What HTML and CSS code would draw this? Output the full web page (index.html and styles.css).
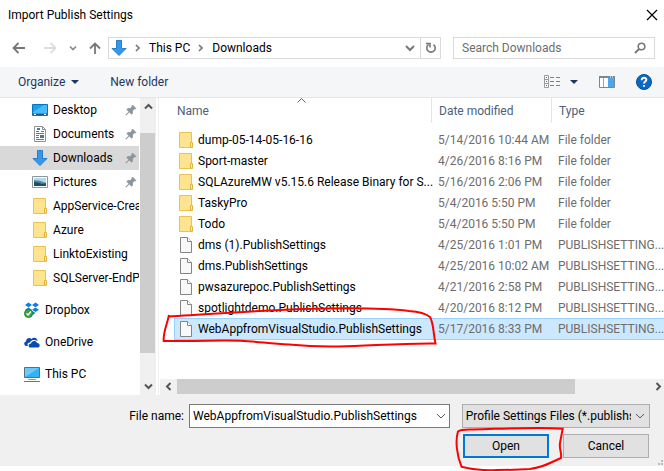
FILE: index.html
```html
<!DOCTYPE html>
<html lang="en">
<head>
<meta charset="utf-8">
<title>Import Publish Settings</title>
<meta name="viewport" content="width=device-width, initial-scale=1">
<link rel="stylesheet" href="styles.css">
</head>
<body>
<svg class="defs" aria-hidden="true">
  <symbol id="folder" viewBox="0 0 16 18">
    <path d="M1.500 1.500h12v10l1 .5v4.500h-13z" fill="#ffe48f" stroke="#e9c255"/>
    <path d="M12.500 16v-4.500h2V16z" fill="#fff0b5" stroke="#e2b43c"/>
  </symbol>
  <symbol id="file" viewBox="0 0 16 18">
    <path d="M2.500 1.500h7l4 4v11h-11z" fill="#f8f8f8" stroke="#858585"/>
    <path d="M9.500 1.500v4h4" fill="#fff" stroke="#858585"/>
  </symbol>
  <symbol id="down" viewBox="0 0 16 18">
    <path d="M5.500 1.500h5v8h4.500L8 16.500 1 9.500h4.500z" fill="#3697e8" stroke="#2480cb"/>
  </symbol>
  <symbol id="pin" viewBox="0 0 12 12">
    <path d="M7.500 1l3.500 3.500-1.200.6-.5-.1-1.900 1.900.1 2.300-1 1L4.300 8 1 11.200 .8 11 4 7.700 1.800 5.500l1-1 2.300.1L7 2.700 6.900 2z" fill="#8a959e" stroke="#8a959e" stroke-width=".8"/>
  </symbol>
  <symbol id="chev-right" viewBox="0 0 6 8"><path d="M1 1l3 3-3 3" fill="none" stroke="#777" stroke-width="1.700"/></symbol>
  <symbol id="chev-down" viewBox="0 0 10 6"><path d="M1 1l4 4 4-4" fill="none" stroke="currentColor"/></symbol>
</svg>

<main class="dialog">
  <header class="titlebar">
    <h1>Import Publish Settings</h1>
    <button class="close" aria-label="Close"><svg width="12" height="12" viewBox="0 0 12 12"><path d="M1 1l10 10M11 1L1 11" stroke="#000" stroke-width="1.200"/></svg></button>
  </header>

  <nav class="navbar" aria-label="Location">
    <div class="history">
      <button class="back" aria-label="Back"><svg width="14" height="12" viewBox="0 0 14 12"><path d="M13 6H2M6.500 1L1.500 6l5 5" fill="none" stroke="#777" stroke-width="1.800"/></svg></button>
      <button aria-label="Forward"><svg width="14" height="12" viewBox="0 0 14 12"><path d="M1 6h11M7.500 1l5 5-5 5" fill="none" stroke="#ddd" stroke-width="1.800"/></svg></button>
      <button aria-label="Recent locations"><svg width="8" height="6" viewBox="0 0 8 6"><path d="M1 1.500l3 3 3-3" fill="none" stroke="#888" stroke-width="1.600"/></svg></button>
      <button aria-label="Up"><svg width="12" height="12" viewBox="0 0 12 12"><path d="M6 12V2M1 6.500l5-5 5 5" fill="none" stroke="#777" stroke-width="1.800"/></svg></button>
    </div>
    <div class="address">
      <svg class="icon" aria-hidden="true"><use href="#down"/></svg>
      <svg class="crumb-sep" aria-hidden="true"><use href="#chev-right"/></svg>
      <a href="#">This PC</a>
      <svg class="crumb-sep" aria-hidden="true"><use href="#chev-right"/></svg>
      <a href="#">Downloads</a>
      <button class="expand" aria-label="Previous locations"><svg width="10" height="8" viewBox="0 0 10 8"><path d="M1 2l4 4 4-4" fill="none" stroke="#777" stroke-width="2"/></svg></button>
      <button class="refresh" aria-label="Refresh"><svg width="12" height="12" viewBox="0 0 12 12"><path d="M8.500 2.600A4.200 4.200 0 1 1 3.500 2.600M1 1.500h4v4" fill="none" stroke="#777" stroke-width="1.600"/></svg></button>
    </div>
    <div class="search">
      <input type="search" placeholder="Search Downloads" aria-label="Search Downloads">
      <svg width="12" height="12" viewBox="0 0 12 12" aria-hidden="true"><circle cx="7.500" cy="4.500" r="3.300" fill="none" stroke="#777" stroke-width="1.600"/><path d="M5 7L1 11" stroke="#777" stroke-width="2"/></svg>
    </div>
  </nav>

  <div class="toolbar">
    <button>Organize <svg width="8" height="4" viewBox="0 0 8 4"><path d="M0 0h8L4 4z" fill="#1c3762"/></svg></button>
    <button>New folder</button>
    <div class="tools">
      <button aria-label="Change view">
        <svg width="17" height="14" viewBox="0 0 17 14"><path d="M.5.5h4v12h-4zM.5 4.500h4M.5 8.500h4" fill="#fff" stroke="#999"/><path d="M2 2h1v1H2zM2 6h1v1H2z" fill="#3d66a3"/><path d="M2 10h1v1H2z" fill="#c33"/><path d="M6 2.500h4m2 0h4M6 6.500h4m2 0h4M6 10.500h4m2 0h4" stroke="#808080"/></svg>
        <svg width="8" height="4" viewBox="0 0 8 4"><path d="M0 0h8L4 4z" fill="#1c3762"/></svg>
      </button>
      <button aria-label="Preview pane"><svg width="16" height="12" viewBox="0 0 16 12"><path d="M.5.500h15v11H.5z" fill="#fff" stroke="#7a8790"/><path d="M0 0h16v2H0z" fill="#7a8790"/><path d="M4.500 2v9" stroke="#9aa"/><path d="M9 2h6v9H9z" fill="#4ba6ec"/><path d="M11 1h1m1 0h1" stroke="#fff"/></svg></button>
      <button aria-label="Help"><svg width="16" height="16" viewBox="0 0 16 16"><circle cx="8" cy="8" r="7.500" fill="#0a67c2" stroke="#0a4f96"/><path d="M5.700 6.200C5.700 3 10.400 3.100 10.400 5.800 10.400 7.600 8 7.600 8 9.600M8 10.900v1.900" fill="none" stroke="#fff" stroke-width="1.900"/></svg></button>
    </div>
  </div>

  <div class="content">
    <aside class="sidebar">
      <nav class="places" aria-label="Places">
        <ul>
          <li><a href="#"><svg class="icon" viewBox="0 0 16 18"><path d="M.5 3.500h15v11H.5z" fill="#15a0f7" stroke="#0874b9"/><path d="M1 11L12 4h3v8H1z" fill="#4bb9fb"/><path d="M1 13.500h14" stroke="#075b98"/><path d="M2 13.500h2m8 0h2" stroke="#fff"/></svg><span>Desktop</span><svg class="pin"><use href="#pin"/></svg></a></li>
          <li><a href="#"><svg class="icon" viewBox="0 0 16 18"><path d="M2.500 1.500h8l3 3v12h-11z" fill="#fff" stroke="#8c9295"/><path d="M10.500 1.500v3h3" fill="none" stroke="#8c9295"/><path d="M4 6.500h3M9 6.500h3M4 8.500h8M4 10.500h3M4 12.500h3M4 14.500h8" stroke="#2d89be"/><path d="M5 3h3v2H5z" fill="#2086c8"/><path d="M8 10h4v3H8z" fill="#477d87"/></svg><span>Documents</span><svg class="pin"><use href="#pin"/></svg></a></li>
          <li><a href="#" class="current"><svg class="icon"><use href="#down"/></svg><span>Downloads</span><svg class="pin"><use href="#pin"/></svg></a></li>
          <li><a href="#"><svg class="icon" viewBox="0 0 16 18"><path d="M.5 3.500h15v11H.5z" fill="#fff" stroke="#8d9498"/><path d="M2 5h12v8H2z" fill="#afd9f2"/><path d="M2 7q6 0 12 3v3H2z" fill="#568b9e"/><path d="M2 9q5 0 8 2l4-1v3H2z" fill="#1e4c69"/></svg><span>Pictures</span><svg class="pin"><use href="#pin"/></svg></a></li>
          <li><a href="#"><svg class="icon"><use href="#folder"/></svg><span>AppService-Crea</span></a></li>
          <li><a href="#"><svg class="icon"><use href="#folder"/></svg><span>Azure</span></a></li>
          <li><a href="#"><svg class="icon"><use href="#folder"/></svg><span>LinktoExisting</span></a></li>
          <li><a href="#"><svg class="icon"><use href="#folder"/></svg><span>SQLServer-EndP</span></a></li>
        </ul>
        <ul class="roots">
          <li><a href="#"><svg class="icon" viewBox="0 0 16 18"><path d="M4.500 1.500L8 4 4.500 6.300 1 4zM11.500 1.500L15 4l-3.500 2.300L8 4zM4.500 6.500L8 8.800 4.500 11 1 8.800zM11.500 6.500L15 8.800 11.500 11 8 8.800zM5 12l3-2.200 3.500 2.200L8 14.500z" fill="#0b7ee0"/><circle cx="4.500" cy="12.500" r="4" fill="#39a647" stroke="#278334"/><path d="M2.500 12.500L4 14l3-3.500" fill="none" stroke="#fff" stroke-width="1.500"/></svg><span>Dropbox</span></a></li>
          <li><a href="#"><svg class="icon" viewBox="0 0 16 18"><path d="M3 13C-.5 13-.5 9 2 8.500 2 5 5.500 4 7.500 6c3-2.500 6-.5 6 2-5-2.500-7 0-7.500 1.500C3.500 9.500 3 11.500 4 13z" fill="#094ab2"/><path d="M6.500 14.500c-2.500 0-2.500-4 .5-4 .5-3 5-3.500 6-.5 3.500 0 3.500 4.500.5 4.500z" fill="#094ab2"/></svg><span>OneDrive</span></a></li>
          <li><a href="#"><svg class="icon" viewBox="0 0 16 18"><path d="M.5 2.500h15v10H.5z" fill="#31b1f6" stroke="#57707e"/><path d="M1 3h14L1 12z" fill="#6bcaf9"/><path d="M4 14.500h8" stroke="#8ba0ad"/><path d="M0 16.500h16" stroke="#62798a"/></svg><span>This PC</span></a></li>
        </ul>
      </nav>
      <div class="vscroll" aria-hidden="true">
        <i><svg width="9" height="7" viewBox="0 0 9 7"><path d="M1 5.500L4.500 2 8 5.500" fill="none" stroke="#555" stroke-width="2"/></svg></i>
        <b></b>
        <i><svg width="9" height="7" viewBox="0 0 9 7"><path d="M1 1.500L4.500 5 8 1.500" fill="none" stroke="#555" stroke-width="2"/></svg></i>
      </div>
    </aside>

    <section class="pane">
      <table>
        <colgroup><col class="c-name"><col class="c-date"><col></colgroup>
        <thead><tr><th>Name<svg class="sorted" width="9" height="5" viewBox="0 0 9 5"><path d="M.5 4.500l4-4 4 4" fill="none" stroke="#666"/></svg></th><th>Date modified</th><th>Type</th></tr></thead>
        <tbody>
          <tr><td><div><svg class="icon"><use href="#folder"/></svg><span>dump-05-14-05-16-16</span></div></td><td>5/14/2016 10:44 AM</td><td>File folder</td></tr>
          <tr><td><div><svg class="icon"><use href="#folder"/></svg><span>Sport-master</span></div></td><td>4/26/2016 8:16 PM</td><td>File folder</td></tr>
          <tr><td><div><svg class="icon"><use href="#folder"/></svg><span>SQLAzureMW v5.15.6 Release Binary for S...</span></div></td><td>5/16/2016 2:06 PM</td><td>File folder</td></tr>
          <tr><td><div><svg class="icon"><use href="#folder"/></svg><span>TaskyPro</span></div></td><td>5/4/2016 5:50 PM</td><td>File folder</td></tr>
          <tr><td><div><svg class="icon"><use href="#folder"/></svg><span>Todo</span></div></td><td>5/4/2016 5:50 PM</td><td>File folder</td></tr>
          <tr><td><div><svg class="icon"><use href="#file"/></svg><span>dms (1).PublishSettings</span></div></td><td>4/25/2016 1:01 PM</td><td>PUBLISHSETTING...</td></tr>
          <tr><td><div><svg class="icon"><use href="#file"/></svg><span>dms.PublishSettings</span></div></td><td>4/25/2016 10:02 AM</td><td>PUBLISHSETTING...</td></tr>
          <tr><td><div><svg class="icon"><use href="#file"/></svg><span>pwsazurepoc.PublishSettings</span></div></td><td>4/21/2016 2:58 PM</td><td>PUBLISHSETTING...</td></tr>
          <tr><td><div><svg class="icon"><use href="#file"/></svg><span>spotlightdemo.PublishSettings</span></div></td><td>4/20/2016 8:12 PM</td><td>PUBLISHSETTING...</td></tr>
          <tr class="selected"><td><div><svg class="icon"><use href="#file"/></svg><span>WebAppfromVisualStudio.PublishSettings</span>
            <svg class="mark mark-file" viewBox="160 304 280 46" aria-hidden="true"><path d="M169 315C167 325 163 332 163.700 341Q195 341 222 340.500C250 340 262 343 289 344.500Q314 347 339 346.500C370 346 400 343 435.500 343.500C433 333 434 324 430 317Q424 312 409 311C385 308 355 308 328 308.500C270 309 220 314 168 316.500"/></svg></div></td><td>5/17/2016 8:33 PM</td><td>PUBLISHSETTING...</td></tr>
        </tbody>
      </table>
      <div class="hscroll" aria-hidden="true">
        <i><svg width="7" height="9" viewBox="0 0 7 9"><path d="M5.500 1L2 4.500 5.500 8" fill="none" stroke="#555" stroke-width="2"/></svg></i>
        <b></b>
        <i><svg width="7" height="9" viewBox="0 0 7 9"><path d="M1.500 1L5 4.500 1.500 8" fill="none" stroke="#555" stroke-width="2"/></svg></i>
      </div>
    </section>
  </div>

  <form class="footer">
    <div class="fields">
      <label for="filename">File name:</label>
      <div class="combo filename">
        <input id="filename" type="text" value="WebAppfromVisualStudio.PublishSettings">
        <button type="button" aria-label="Show recent file names"><svg width="10" height="6"><use href="#chev-down"/></svg></button>
      </div>
      <div class="combo filter">
        <select aria-label="File type"><option>Profile Settings Files (*.publishs</option></select>
        <svg width="10" height="6" aria-hidden="true"><use href="#chev-down"/></svg>
      </div>
    </div>
    <div class="actions">
      <div class="primary">
        <button type="button">Open</button>
        <svg class="mark mark-open" viewBox="453 424 114 48" aria-hidden="true"><path d="M562.700 428.700C532 427 500 429 473 429.500Q461 429 458 431.500C455 441 457 456 461.500 466.700Q478 471 497 470Q515 470 530 469Q542 467 550 463L561 458C562 453 559 449 560 443Z"/></svg>
      </div>
      <button type="button">Cancel</button>
    </div>
    <svg class="grip" width="6" height="6" viewBox="0 0 6 6" aria-hidden="true"><path d="M3 0h2v2H3zM0 3h2v2H0zM3 3h2v2H3z" fill="#bbb"/></svg>
  </form>
</main>
</body>
</html>
```

FILE: styles.css
```css
* { box-sizing: border-box; }
body {
  margin: 0;
  background: #fff;
  color: #000;
  font: 12px/16px "Segoe UI", Roboto, "Open Sans", sans-serif;
}
button, input, select { font: inherit; color: inherit; }
button { padding: 0; border: 0; background: none; }
a { color: inherit; text-decoration: none; }
ul { margin: 0; padding: 0; list-style: none; }
svg { flex: none; }
.defs { position: absolute; width: 0; height: 0; }
.icon { width: 16px; height: 18px; }

.dialog {
  display: flex;
  flex-direction: column;
  min-height: 100vh;
  padding-bottom: 5px;
  overflow: hidden;
}

.titlebar {
  display: flex;
  align-items: center;
  justify-content: space-between;
  height: 30px;
  padding: 0 6px 0 8px;
}
.titlebar h1 { margin: 0; font-size: 12px; font-weight: 400; }
.close { display: flex; }

.navbar {
  display: flex;
  height: 37px;
  padding: 7px 9px 8px 12px;
}
.history { display: flex; flex: none; align-items: center; gap: 12px; width: 96px; }
.history button { display: flex; }
.history .back { margin-right: 5px; }
.address {
  display: flex;
  flex: 329;
  align-items: center;
  margin-right: 12px;
  border: 1px solid #d9d9d9;
  padding-left: 2px;
}
.crumb-sep { width: 6px; height: 8px; margin: 0 8px; }
.expand { margin-left: auto; padding-right: 5px; display: flex; }
.refresh {
  display: flex;
  align-items: center;
  justify-content: center;
  align-self: stretch;
  width: 20px;
  border-left: 1px solid #d9d9d9;
}
.search {
  display: flex;
  flex: 184;
  align-items: center;
  padding: 0 8px;
  border: 1px solid #d9d9d9;
}
.search input { flex: 1; min-width: 0; padding: 0; border: 0; outline: 0; background: none; }
.search input::placeholder { color: #6d6d6d; }

.toolbar {
  display: flex;
  align-items: center;
  gap: 31px;
  height: 31px;
  padding: 0 12px 0 18px;
  border-bottom: 1px solid #e5e5e5;
  background: #f4f6f8;
  color: #1c3762;
}
.toolbar button { display: flex; align-items: center; gap: 6px; }
.tools { display: flex; align-items: center; gap: 21px; margin-left: auto; }
.tools button { gap: 9px; }

.content { display: flex; flex: 1; }
.sidebar { display: flex; width: 159px; border-right: 1px solid #f0f0f0; }
.places { flex: 1; min-width: 0; padding-bottom: 9px; }
.places a {
  display: flex;
  align-items: center;
  gap: 5px;
  height: 24px;
  margin-right: 1px;
  padding-left: 32px;
}
.places span { flex: 1; overflow: hidden; white-space: nowrap; }
.places .current { background: #d9d9d9; }
.pin { width: 12px; height: 12px; margin-right: 2px; }
.roots { display: grid; gap: 8px; padding-top: 8px; }
.roots a { padding-left: 24px; }
.vscroll { display: flex; flex-direction: column; width: 16px; margin-right: 2px; background: #f0f0f0; }
.vscroll i, .hscroll i { display: flex; align-items: center; justify-content: center; flex: none; }
.vscroll i { height: 17px; }
.vscroll b { flex: 220; margin: 18px 1px 25px 0; background: #cdcdcd; }

.pane { display: flex; flex: 1; flex-direction: column; min-width: 0; padding-left: 1px; }
table {
  width: calc(100% - 14px);
  margin-left: 14px;
  border-collapse: separate;
  border-spacing: 0;
  table-layout: fixed;
}
.c-name { width: 257px; }
.c-date { width: 120px; }
th {
  position: relative;
  height: 25px;
  padding: 0 0 0 7px;
  border-left: 1px solid #e5e5e5;
  color: #4c607a;
  font-weight: 400;
  text-align: left;
}
th:first-child { padding-left: 3px; border-left: 0; }
.sorted { position: absolute; top: 0; left: 123px; }
tbody::before { content: ""; display: block; height: 6px; }
td { height: 21px; padding: 0 0 0 7px; color: #6d6d6d; white-space: nowrap; }
td:first-child { padding: 0 0 0 4px; color: #000; }
td div { display: flex; position: relative; align-items: center; gap: 4px; }
.selected td { height: 22px; border: 1px solid #99d1ff; border-width: 1px 0; background: #cce8ff; }
.selected td:first-child { border-left-width: 1px; padding-left: 3px; }
.hscroll { display: flex; height: 15px; margin: auto 0 1px; background: #f0f0f0; box-shadow: 0 1px #f0f0f0; }
.hscroll i { width: 17px; }
.hscroll i:last-child { width: 11px; }
.hscroll b { flex: 1; margin-right: 78px; background: #cdcdcd; }

.mark { position: absolute; fill: none; stroke: #f00; stroke-width: 2px; overflow: visible; pointer-events: none; }
.mark-file { left: -18px; top: -16px; width: 280px; height: 46px; }
.mark-open { left: -10px; top: -10px; width: 114px; height: 48px; }

.footer { position: relative; padding: 9px 14px 8px; background: #f0f0f0; }
.fields { display: flex; align-items: center; }
.fields label { flex: none; width: 175px; padding-right: 5px; text-align: right; }
.combo { display: flex; position: relative; align-items: center; height: 24px; border: 1px solid #7a7a7a; color: #000; }
.filename { flex: 261; min-width: 0; background: #fff; }
.filename input { flex: 1; min-width: 0; padding: 0 0 0 3px; border: 0; outline: 0; background: none; }
.combo button { display: flex; padding-right: 3px; }
.combo svg { color: #555; }
.filter { flex: 188; min-width: 0; margin-left: 12px; border-color: #adadad; background: #e1e1e1; }
.filter select {
  flex: 1;
  min-width: 0;
  height: 22px;
  padding: 0 18px 0 3px;
  border: 0;
  appearance: none;
  background: none;
}
.filter svg { position: absolute; right: 4px; pointer-events: none; }
.actions { display: flex; justify-content: flex-end; gap: 14px; padding: 6px 1px 0 0; }
.actions button { display: block; width: 86px; height: 24px; border: 1px solid #adadad; background: #e1e1e1; }
.actions .primary { position: relative; }
.actions .primary button { border: 2px solid #0078d7; }
.grip { position: absolute; right: 0; bottom: 0; }
```
